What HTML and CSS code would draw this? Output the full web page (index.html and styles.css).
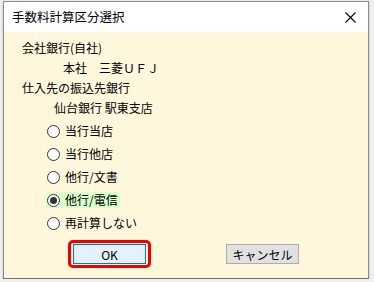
FILE: index.html
```html
<!DOCTYPE html>
<html lang="ja">
<head>
  <meta charset="UTF-8" />
  <title>手数料計算区分選択</title>
  <link rel="stylesheet" href="styles.css">
</head>
<body>

  <div class="ventana">
    <!-- Barra de titulo -->
    <div class="titulo">
      <span>手数料計算区分選択</span>
      <span class="cerrar">
        <svg width="11" height="11" viewBox="0 0 11 11"><path d="M0.5 0.5L10.5 10.5M10.5 0.5L0.5 10.5" stroke="#000" stroke-width="1.1"/></svg>
      </span>
    </div>

    <div class="cuerpo">
      <div class="linea">会社銀行(自社)</div>
      <div class="linea sangria1">本社　三菱ＵＦＪ</div>
      <div class="linea">仕入先の振込先銀行</div>
      <div class="linea sangria2">仙台銀行 駅東支店</div>

      <div class="opciones">
        <label class="opcion"><span class="radio"></span><span>当行当店</span></label>
        <label class="opcion"><span class="radio"></span><span>当行他店</span></label>
        <label class="opcion"><span class="radio"></span><span>他行/文書</span></label>
        <label class="opcion elegida"><span class="radio marcado"></span><span>他行/電信</span></label>
        <label class="opcion"><span class="radio"></span><span>再計算しない</span></label>
      </div>

      <div class="botones">
        <div class="foco"><button class="boton ok">OK</button></div>
        <button class="boton">キャンセル</button>
      </div>
    </div>
  </div>

</body>
</html>
```

FILE: styles.css
```css
body {
  margin: 0;
  background-color: #f0f0f0;
  font-family: 'Noto Sans CJK JP', 'DejaVu Sans', sans-serif;
  font-size: 12px;
  color: #000;
}

.ventana {
  margin: 1px 0 0 3px;
  width: 364px;
  height: 276px;
  border: 1px solid #8a8a8a;
  border-bottom-color: #707070;
  display: flex;
  flex-direction: column;
  background-color: #fff7dc;
  box-shadow: 0 1px 2px rgba(0,0,0,0.25);
}

.titulo {
  height: 30px;
  background-color: #fff;
  display: flex;
  align-items: center;
  justify-content: space-between;
  padding: 0 12px 0 8px;
  font-size: 12.5px;
  line-height: 30px;
}

.cerrar {
  display: flex;
  align-items: center;
  margin-top: 1px;
}

.cuerpo {
  padding: 6px 0 0 18px;
  display: flex;
  flex-direction: column;
}

.linea {
  height: 20px;
  line-height: 20px;
}

.sangria1 {
  padding-left: 41px;
}

.sangria2 {
  padding-left: 32px;
}

.opciones {
  margin-top: 5px;
  padding-left: 24px;
  display: flex;
  flex-direction: column;
  gap: 7px;
}

.opcion {
  display: flex;
  align-items: center;
  gap: 5px;
  height: 16px;
  line-height: 16px;
  align-self: flex-start;
  padding-right: 2px;
}

.elegida {
  background-color: #d9ffcc;
}

.radio {
  width: 11px;
  height: 11px;
  border: 1px solid #333;
  border-radius: 50%;
  background-color: #fff;
  position: relative;
  margin-left: 1px;
}

.radio.marcado::after {
  content: "";
  position: absolute;
  left: 2px;
  top: 2px;
  width: 7px;
  height: 7px;
  border-radius: 50%;
  background-color: #333;
}

.botones {
  margin-top: 13px;
  padding-left: 46px;
  display: flex;
  align-items: center;
  gap: 75px;
}

.foco {
  border: 3px solid #ee0000;
  border-radius: 5px;
  padding: 1px 2px;
  margin: -4px 0;
}

.boton {
  width: 73px;
  height: 20px;
  padding: 0;
  font-family: 'Noto Sans CJK JP', 'DejaVu Sans', sans-serif;
  font-size: 12px;
  color: #000;
  background-color: #e1e1e1;
  border: 1px solid #adadad;
  display: block;
}

.ok {
  background-color: #e5f1fb;
  border-color: #0078d7;
}
```
